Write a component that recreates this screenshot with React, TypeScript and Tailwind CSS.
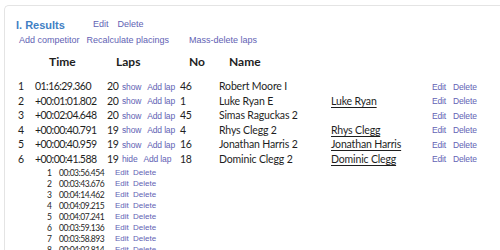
import React from 'react';

const rows = [
  { pos: '1', time: '01:16:29.360', laps: '20', open: false, no: '46', name: 'Robert Moore I', member: '' },
  { pos: '2', time: '+00:01:01.802', laps: '20', open: false, no: '1', name: 'Luke Ryan E', member: 'Luke Ryan' },
  { pos: '3', time: '+00:02:04.648', laps: '20', open: false, no: '45', name: 'Simas Raguckas 2', member: '' },
  { pos: '4', time: '+00:00:40.791', laps: '19', open: false, no: '4', name: 'Rhys Clegg 2', member: 'Rhys Clegg' },
  { pos: '5', time: '+00:00:40.959', laps: '19', open: false, no: '16', name: 'Jonathan Harris 2', member: 'Jonathan Harris' },
  { pos: '6', time: '+00:00:41.588', laps: '19', open: true, no: '18', name: 'Dominic Clegg 2', member: 'Dominic Clegg' },
];

const lapTimes = [
  '00:03:56.454',
  '00:03:43.676',
  '00:04:14.462',
  '00:04:09.215',
  '00:04:07.241',
  '00:03:59.136',
  '00:03:58.893',
  '00:04:02.814',
];

const link = "text-[#6262b4] font-['Liberation_Sans',Arial,sans-serif] text-[8.5px] cursor-pointer";

const App = () => {
  return (
    <div className="w-[500px] h-[250px] overflow-hidden bg-white pt-[5px] pl-[4px]">
      <div className="w-[600px] h-[400px] border-t border-l border-[#e4e4e4] rounded-tl-[5px] pt-[12px]">
        {/* heading */}
        <div className="h-[14px] flex items-center pl-[11px]">
          <span className="font-['Liberation_Sans',Arial,sans-serif] font-bold text-[11px] text-[#3f80c4]">I. Results</span>
          <span className={`${link} text-[9px] ml-[28px] text-[#5f6b9c]`}>Edit</span>
          <span className={`${link} text-[9px] ml-[9px] text-[#5f6b9c]`}>Delete</span>
        </div>
        <div className="h-[13px] mt-[2px] flex items-center pl-[14px]">
          <span className={`${link} text-[9px] text-[#3c4b96]`}>Add competitor</span>
          <span className={`${link} text-[9px] ml-[7px] text-[#3c4b96]`}>Recalculate placings</span>
          <span className={`${link} text-[9px] ml-[20px] text-[#3c4b96]`}>Mass-delete laps</span>
        </div>

        {/* results table */}
        <div className="font-['Lato',sans-serif] text-[#1e1e1e] mt-[7px]">
          <div className="h-[16px] flex items-center pl-[13px] font-bold text-[12px]">
            <span className="w-[17px]" />
            <span className="w-[72px] pl-[14px]">Time</span>
            <span className="w-[73px] pl-[9px]">Laps</span>
            <span className="w-[39px] pl-[9px]">No</span>
            <span className="pl-[10px]">Name</span>
          </div>

          <div className="mt-[9.75px]">
            {rows.map((r) => (
              <div key={r.pos} className="h-[14.5px] flex items-center pl-[13px] text-[10.5px] tracking-[-0.15px] whitespace-nowrap">
                <span className="w-[17px]">{r.pos}</span>
                <span className="w-[72px] tracking-[-0.55px]">{r.time}</span>
                <span className="w-[73px] flex items-center">
                  <span className="w-[15px] tracking-[-0.4px]">{r.laps}</span>
                  <span className={link}>{r.open ? 'hide' : 'show'}</span>
                  <span className={`${link} ml-[6px]`}>Add lap</span>
                </span>
                <span className="w-[39px] tracking-[-0.4px]">{r.no}</span>
                <span className="w-[112px]">{r.name}</span>
                <span className="w-[101px] underline underline-offset-2">{r.member}</span>
                <span className={`${link} text-[#6a6ab4]`}>Edit</span>
                <span className={`${link} ml-[7px] text-[#6a6ab4]`}>Delete</span>
              </div>
            ))}
          </div>

          {/* expanded laps */}
          <div className="mt-[0.75px]">
            {lapTimes.map((t, i) => (
              <div key={t} className="h-[11px] flex items-center pl-[13px] text-[8.5px] whitespace-nowrap">
                <span className="w-[34px] text-right">{i + 1}</span>
                <span className="w-[63px] pl-[7px] tracking-[-0.45px]">{t}</span>
                <span className={`${link} w-[18px] text-[8px]`}>Edit</span>
                <span className={`${link} text-[8px]`}>Delete</span>
              </div>
            ))}
          </div>
        </div>
      </div>
    </div>
  );
};

export default App;
